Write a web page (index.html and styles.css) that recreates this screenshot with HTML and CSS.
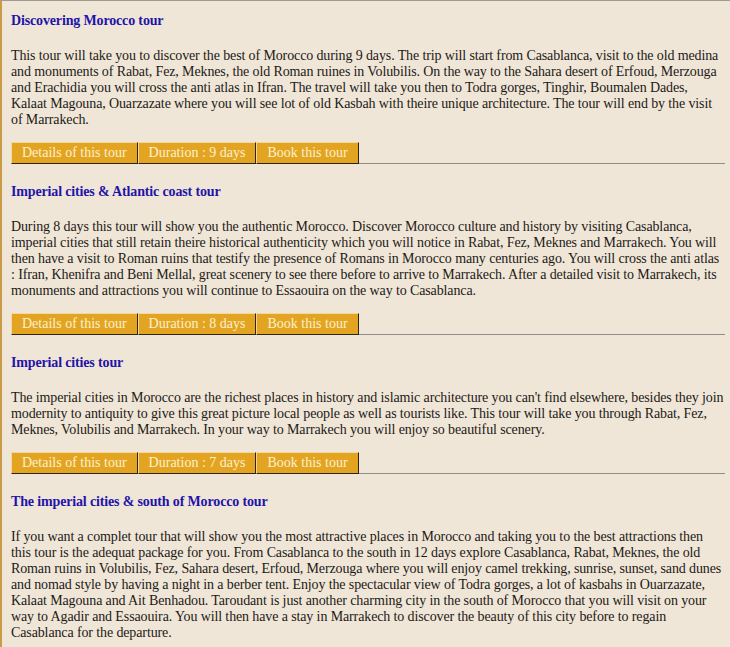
FILE: index.html
```html
<!DOCTYPE html>
<html lang="en">
<head>
    <meta charset="UTF-8">
    <title>Morocco tours</title>
    <link rel="stylesheet" href="styles.css">
</head>
<body>
    <div id="tours">
        <div class="tour">
            <h2 class="tour-title">Discovering Morocco tour</h2>
            <p class="tour-text">This tour will take you to discover the best of Morocco during 9 days. The trip will start from Casablanca, visit to the old medina and monuments of Rabat, Fez, Meknes, the old Roman ruines in Volubilis. On the way to the Sahara desert of Erfoud, Merzouga and Erachidia you will cross the anti atlas in Ifran. The travel will take you then to Todra gorges, Tinghir, Boumalen Dades, Kalaat Magouna, Ouarzazate where you will see lot of old Kasbah with theire unique architecture. The tour will end by the visit of Marrakech.</p>
            <div class="tour-buttons">
                <a class="tour-btn" href="#">Details of this tour</a>
                <a class="tour-btn" href="#">Duration : 9 days</a>
                <a class="tour-btn" href="#">Book this tour</a>
            </div>
        </div>

        <div class="tour">
            <h2 class="tour-title">Imperial cities &amp; Atlantic coast tour</h2>
            <p class="tour-text">During 8 days this tour will show you the authentic Morocco. Discover Morocco culture and history by visiting Casablanca, imperial cities that still retain theire historical authenticity which you will notice in Rabat, Fez, Meknes and Marrakech. You will then have a visit to Roman ruins that testify the presence of Romans in Morocco many centuries ago. You will cross the anti atlas : Ifran, Khenifra and Beni Mellal, great scenery to see there before to arrive to Marrakech. After a detailed visit to Marrakech, its monuments and attractions you will continue to Essaouira on the way to Casablanca.</p>
            <div class="tour-buttons">
                <a class="tour-btn" href="#">Details of this tour</a>
                <a class="tour-btn" href="#">Duration : 8 days</a>
                <a class="tour-btn" href="#">Book this tour</a>
            </div>
        </div>

        <div class="tour">
            <h2 class="tour-title">Imperial cities tour</h2>
            <p class="tour-text">The imperial cities in Morocco are the richest places in history and islamic architecture you can't find elsewhere, besides they join modernity to antiquity to give this great picture local people as well as tourists like. This tour will take you through Rabat, Fez, Meknes, Volubilis and Marrakech. In your way to Marrakech you will enjoy so beautiful scenery.</p>
            <div class="tour-buttons">
                <a class="tour-btn" href="#">Details of this tour</a>
                <a class="tour-btn" href="#">Duration : 7 days</a>
                <a class="tour-btn" href="#">Book this tour</a>
            </div>
        </div>

        <div class="tour">
            <h2 class="tour-title">The imperial cities &amp; south of Morocco tour</h2>
            <p class="tour-text">If you want a complet tour that will show you the most attractive places in Morocco and taking you to the best attractions then this tour is the adequat package for you. From Casablanca to the south in 12 days explore Casablanca, Rabat, Meknes, the old Roman ruins in Volubilis, Fez, Sahara desert, Erfoud, Merzouga where you will enjoy camel trekking, sunrise, sunset, sand dunes and nomad style by having a night in a berber tent. Enjoy the spectacular view of Todra gorges, a lot of kasbahs in Ouarzazate, Kalaat Magouna and Ait Benhadou. Taroudant is just another charming city in the south of Morocco that you will visit on your way to Agadir and Essaouira. You will then have a stay in Marrakech to discover the beauty of this city before to regain Casablanca for the departure.</p>
        </div>
    </div>
</body>
</html>
```

FILE: styles.css
```css
body {
    margin: 0;
    font-family: "Liberation Serif", "Times New Roman", serif;
    font-size: 14px;
    background: #f0e6d8;
}

#tours {
    min-height: 646px;
    border-top: 1px solid #a09a90;
    border-left: 2px solid #c99a48; /* bord doré à gauche */
    padding: 0 5px 0 9px;
    background: #f0e6d8;
}

.tour {
    padding: 12px 0 8px;
}

.tour-title {
    margin: 0 0 19px;
    font-size: 14px;
    line-height: 16px;
    font-weight: bold;
    letter-spacing: -0.15px;
    color: #1f14a8;
}

.tour-text {
    margin: 0 0 14px;
    line-height: 16px;
    letter-spacing: -0.12px;
    color: #1c1a16;
}

/* barre des boutons, la ligne grise continue jusqu'au bord */
.tour-buttons {
    display: flex;
    border-bottom: 1px solid #8f8c88;
}

.tour-btn {
    display: block;
    margin-bottom: -1px;
    padding: 2px 10px;
    line-height: 16px;
    background: #e3a521;
    color: #fdf0cf;
    text-decoration: none;
    border: 1px solid;
    border-color: #f2d9a0 #2e2414 #2e2414 #f2d9a0;
}
```
